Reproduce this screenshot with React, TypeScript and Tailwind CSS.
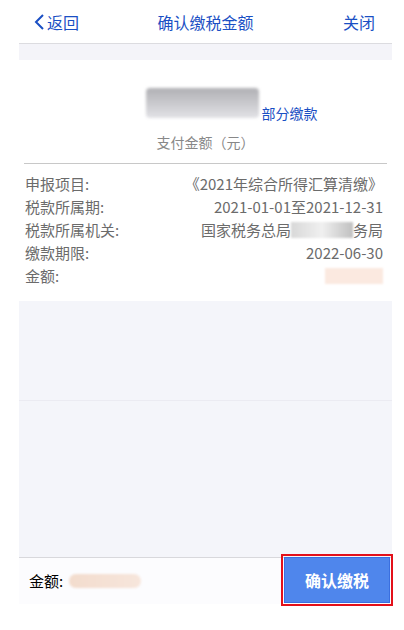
import React from "react";

const rows = [
  { label: "申报项目:", value: "《2021年综合所得汇算清缴》" },
  { label: "税款所属期:", value: "2021-01-01至2021-12-31" },
  { label: "税款所属机关:", value: "国家税务总局" },
  { label: "缴款期限:", value: "2022-06-30" },
  { label: "金额:", value: "" },
];

export default function App() {
  return (
    <div
      className="w-[404px] h-[630px] bg-white overflow-hidden"
      style={{ fontFamily: '"Noto Sans CJK SC", "Liberation Sans", sans-serif' }}
    >
      <div className="mx-[19px] w-[373px] flex flex-col h-[604px]">
        {/* header */}
        <div className="h-[44px] grid grid-cols-[1fr_auto_1fr] items-center text-[#1a4fc4] text-[16px] border-b border-[#dcdce0]">
          <div className="flex items-center pl-[15px]">
            <svg width="11" height="18" viewBox="0 0 11 18" className="mr-[2px]">
              <path d="M9 2 L2 9 L9 16" stroke="#1a4fc4" strokeWidth="2" fill="none" />
            </svg>
            <span>返回</span>
          </div>
          <span>确认缴税金额</span>
          <span className="justify-self-end pr-[17px]">关闭</span>
        </div>
        <div className="h-[16px] bg-[#f4f4f9]" />

        {/* amount */}
        <div className="h-[103px] flex flex-col items-center">
          <div className="flex items-end mt-[28px] ml-[52px]">
            <div className="w-[113px] h-[30px] bg-gradient-to-b from-[#b0b0b4] to-[#e2e2e6] blur-[1.5px] rounded-sm" />
            <span className="text-[#1a4fc4] text-[14px] leading-[16px] ml-[3px] -mb-[3px]">部分缴款</span>
          </div>
          <div className="text-[#888] text-[14px] mt-[14px]">支付金额（元）</div>
        </div>
        <div className="mx-[5px] border-t border-[#c8c8c8]" />

        {/* details */}
        <div className="pl-[6px] pr-[9px] pt-[8px] pb-[4px] text-[15px] text-[#6b6b6b] flex flex-col">
          {rows.map((r, i) => (
            <div key={i} className="flex justify-between h-[23px] leading-[23px]">
              <span>{r.label}</span>
              {i === 2 ? (
                <span className="flex items-center">
                  国家税务总局
                  <span className="inline-block w-[62px] h-[16px] bg-gradient-to-r from-[#d8d8d8] via-[#f0f0f0] to-[#c0c0c0] blur-[1px]" />
                  务局
                </span>
              ) : i === 4 ? (
                <span className="flex items-center">
                  <span className="inline-block w-[58px] h-[16px] bg-[#fbe9e0] blur-[1px]" />
                </span>
              ) : (
                <span>{r.value}</span>
              )}
            </div>
          ))}
        </div>

        {/* gray area */}
        <div className="flex-1 bg-[#f4f5fa] flex flex-col mt-[10px]">
          <div className="h-[100px] border-b border-[#ebebf2]" />
        </div>

        {/* bottom bar */}
        <div className="h-[47px] flex items-center justify-between border-t border-[#d8d8dc] bg-[#fcfcfe]">
          <div className="flex items-center pl-[10px] text-[15px] text-black">
            <span>金额:</span>
            <span className="inline-block ml-[6px] w-[72px] h-[14px] rounded-full bg-gradient-to-r from-[#f3dccd] to-[#f7e6dc] blur-[1px]" />
          </div>
          <div className="border-2 border-[#e3101a] p-px -mt-[4px] -mr-[1px] mb-[-2px]">
            <button className="w-[106px] h-[46px] bg-[#4f86ec] border border-[#3a6fe0] text-white text-[16px] font-bold">
              确认缴税
            </button>
          </div>
        </div>
      </div>
    </div>
  );
}
